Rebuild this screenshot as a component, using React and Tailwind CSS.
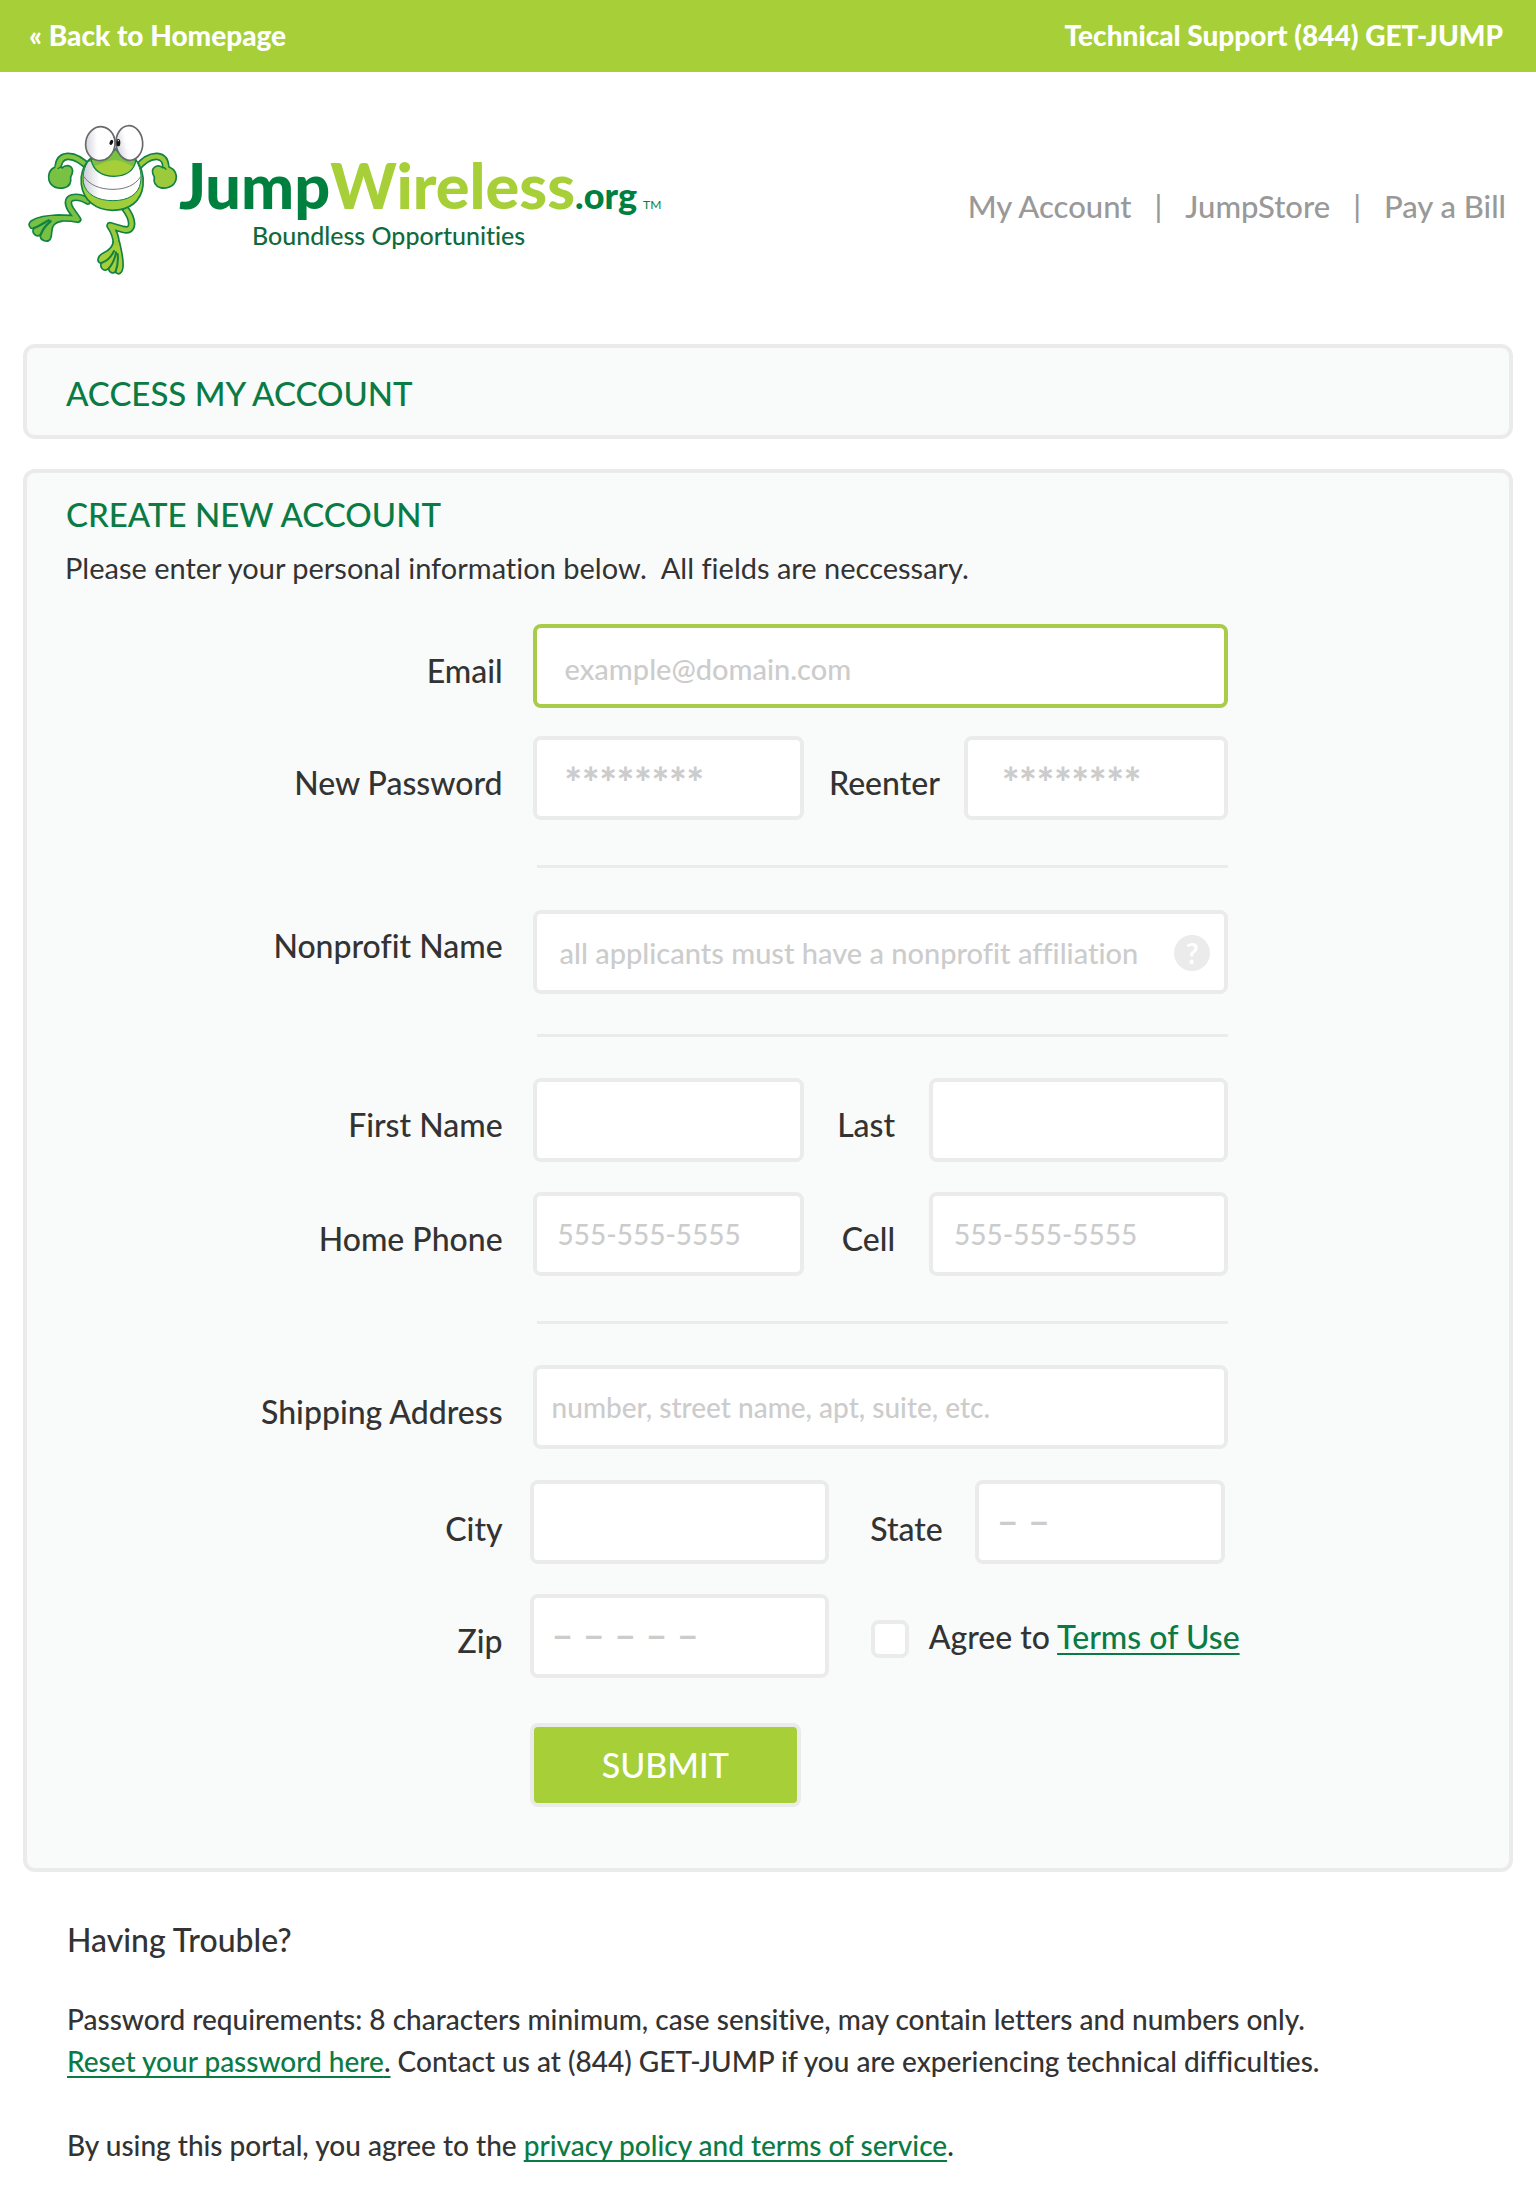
const FIELD =
  "h-[84px] min-w-0 rounded-lg border-4 border-[#ebebeb] bg-white text-[#333333] outline-none placeholder:text-[#cccccc] placeholder:opacity-100";
const LABEL = "whitespace-nowrap text-right text-[32px] leading-[40px] text-[#333333]";
const LINK = "text-[#0b7b45] underline decoration-2 underline-offset-4 [text-decoration-skip-ink:none]";
const STARS = "text-[29px] placeholder:text-[41px] placeholder:font-black";
const DASHES = "text-[28px] pl-[18px] pt-1 placeholder:text-[38px] placeholder:font-bold";

function Frog() {
  return (
    <svg viewBox="80 100 456 459" className="h-[153px] w-[152px] shrink-0" role="img" aria-label="Frog mascot">
      <defs>
        <linearGradient id="eye" x1="0" x2="1" y1="0.6" y2="0.4">
          <stop offset="0" stopColor="#d3d4dc" />
          <stop offset="0.4" stopColor="#ffffff" />
        </linearGradient>
        <linearGradient id="belly" x1="0" x2="1">
          <stop offset="0" stopColor="#c9cbd6" />
          <stop offset="0.28" stopColor="#ffffff" />
        </linearGradient>
      </defs>
      <g fill="none" strokeLinecap="round" strokeLinejoin="round">
        {/* arms */}
        <g stroke="#118243" strokeWidth="23">
          <path d="M268 236C245 212 222 199 202 200C182 201 173 216 173 240" />
          <path d="M408 238C428 212 450 199 470 200C492 202 498 218 496 242" />
        </g>
        <g stroke="#84c641" strokeWidth="13">
          <path d="M268 236C245 212 222 199 202 200C182 201 173 216 173 240" />
          <path d="M408 238C428 212 450 199 470 200C492 202 498 218 496 242" stroke="#9bcb3c" />
        </g>
        {/* hands */}
        <path d="M163 233C147 239 142 258 146 272C152 292 172 299 193 294C208 290 213 278 211 262C217 251 219 238 211 231C201 225 191 229 184 236" fill="#79c143" stroke="#118243" strokeWidth="5" />
        <path d="M507 232C524 239 531 256 527 270C521 290 500 299 480 294C464 289 459 278 462 262C456 252 454 240 462 233C472 226 482 229 490 237" fill="#9bcb3c" stroke="#118243" strokeWidth="5" />
        <path d="M170 231L172 240H182" stroke="#84c641" strokeWidth="9" />
        <path d="M499 229L497 242L489 240" stroke="#9bcb3c" strokeWidth="9" />
        <path d="M173 237C177 233 181 231 185 232M486 233C491 232 494 235 497 239" stroke="#118243" strokeWidth="4" />
        {/* left leg */}
        <path d="M262 334C245 324 228 321 216 324C200 329 202 344 211 359L232 389C205 383 190 385 165 386" stroke="#118243" strokeWidth="23" />
        <path d="M180 376C145 376 112 380 92 394C81 404 88 419 100 416C93 430 107 444 120 436C118 453 143 462 151 446C157 429 151 419 160 407C165 400 172 396 184 395Z" fill="#79c143" stroke="#118243" strokeWidth="5" />
        <path d="M262 334C245 324 228 321 216 324C200 329 202 344 211 359L232 389C205 383 190 385 165 386" stroke="#79c143" strokeWidth="13" />
        <path d="M101 415C116 411 130 400 145 392M121 435C127 418 138 405 151 395" stroke="#118243" strokeWidth="7" />
        {/* right leg */}
        <path d="M374 356C385 370 393 384 394 402C393 419 384 423 368 419L329 408C340 424 347 440 348 462" stroke="#118243" strokeWidth="23" />
        <path d="M339 455C338 470 326 482 309 490C292 498 287 516 302 521C298 538 314 547 324 537C330 555 342 549 345 547C355 558 366 551 368 532C370 510 364 483 357 455Z" fill="#a6ce39" stroke="#118243" strokeWidth="5" />
        <path d="M374 356C385 370 393 384 394 402C393 419 384 423 368 419L329 408C340 424 347 440 348 462" stroke="#98ca3c" strokeWidth="13" />
        <path d="M303 520C319 515 333 501 341 484M324 538C336 524 344 508 347 488M345 548C352 530 354 511 352 493" stroke="#118243" strokeWidth="6" />
      </g>
      {/* body */}
      <path d="M272 205C248 226 239 257 243 284C249 333 288 362 336 362C388 362 423 334 428 288C431 257 422 226 402 205Z" fill="#9fce3a" stroke="#118243" strokeWidth="5" />
      <path d="M265 214C250 233 247 254 249 279C257 315 292 333 338 333C383 333 415 315 421 277C425 252 418 229 406 212Z" fill="url(#belly)" stroke="#118243" strokeWidth="3" />
      <path d="M250 260C268 287 300 299 338 299C376 299 405 286 421 261" fill="none" stroke="#77777c" strokeWidth="3" />
      {/* face */}
      <path d="M345 178C330 200 300 205 272 209C278 240 302 259 341 260C381 259 402 240 407 211C380 207 362 200 345 178Z" fill="#79c143" stroke="#118243" strokeWidth="4" />
      <path d="M282 228C305 225 322 210 344 212C366 211 380 224 398 230C388 248 368 257 341 257C312 257 294 245 282 228Z" fill="#a6ce39" />
      {/* eyes */}
      <g stroke="#69696c" strokeWidth="5" fill="url(#eye)">
        <ellipse cx="300" cy="162" rx="44" ry="51" transform="rotate(8 300 162)" />
        <ellipse cx="387" cy="160" rx="40" ry="52" transform="rotate(-4 387 160)" />
      </g>
      <g fill="#111111">
        <ellipse cx="333" cy="158" rx="5" ry="8" transform="rotate(25 333 158)" />
        <ellipse cx="354" cy="159" rx="6" ry="11" />
      </g>
      <circle cx="354" cy="153" r="2" fill="#ffffff" />
    </svg>
  );
}

function Row({ id, label, labelClass = "pt-2.5", columns = "gap-x-[30px]", children }) {
  return (
    <div className={`grid grid-cols-[32%_47%] ${columns}`}>
      <label htmlFor={id} className={`self-center ${LABEL} ${labelClass}`}>
        {label}
      </label>
      <div className="flex items-center">{children}</div>
    </div>
  );
}

function Divider({ className }) {
  return (
    <div className={`grid grid-cols-[32%_47%] gap-x-[30px] ${className}`}>
      <hr className="col-start-2 ml-1 h-[3px] border-0 bg-[#ebebeb]" />
    </div>
  );
}

export default function App() {
  return (
    <div className="min-h-screen bg-white pb-8 font-['Lato','Open_Sans',sans-serif] text-[#333333] [font-variant-ligatures:none]">
      <div className="flex h-[72px] items-center justify-between bg-[#a6cf38] pr-[33px] pb-0.5 pl-[29px] text-[28px] leading-9 font-black text-white">
        <a href="#home">« Back to Homepage</a>
        <a href="#support">Technical Support (844) GET-JUMP</a>
      </div>

      <header className="flex h-[272px] items-start justify-between pr-[30px] pl-[27px]">
        <a href="#home" className="flex items-start pt-[51px]">
          <Frog />
          <span className="flex flex-col whitespace-nowrap">
            <span className="flex items-baseline pt-[27px] leading-[70px] font-black">
              <span className="text-[63px] text-[#00803f]">Jump</span>
              <span className="text-[63px] text-[#a6cf38]">Wireless</span>
              <span className="text-[36px] leading-none text-[#00803f]">.org</span>
              <span className="pl-1.5 text-[12px] leading-none font-normal text-[#00803f]">TM</span>
            </span>
            <span className="pl-[73px] text-[25px] leading-[30px] font-medium text-[#0f6b3c]">Boundless Opportunities</span>
          </span>
        </a>
        <nav className="flex gap-[23px] pt-[114px] text-[31px] leading-10 font-medium whitespace-nowrap text-[#999999]">
          <a href="#account">My Account</a>
          <span aria-hidden="true">|</span>
          <a href="#store">JumpStore</a>
          <span aria-hidden="true">|</span>
          <a href="#bill">Pay a Bill</a>
        </nav>
      </header>

      <main className="px-[23px]">
        <section className="rounded-xl border-4 border-[#ebebeb] bg-[#f9fbfa] px-[39px] pt-[25px] pb-[22px]">
          <h2 className="text-[33px] leading-10 font-medium text-[#0b7b45]">ACCESS MY ACCOUNT</h2>
        </section>

        <section className="mt-[30px] rounded-xl border-4 border-[#ebebeb] bg-[#f9fbfa] pt-[21px] pb-[61px]">
          <h2 className="px-[39px] text-[33px] leading-10 font-medium text-[#0b7b45]">CREATE NEW ACCOUNT</h2>
          <p className="mt-4 px-[38px] text-[29px] leading-9">
            Please enter your personal information below.&nbsp; All fields are neccessary.
          </p>

          <form className="mt-[38px] pl-0.5 font-medium" onSubmit={(e) => e.preventDefault()}>
            <Row id="email" label="Email">
              <input id="email" type="email" placeholder="example@domain.com" className={`${FIELD} w-full border-[#a9cb4a]! pt-1 pl-7 text-[29px]`} />
            </Row>
            <div className="h-7" />
            <Row id="password" label="New Password">
              <input id="password" type="password" placeholder="********" className={`${FIELD} ${STARS} w-[39%] pt-4 pl-7`} />
              <label htmlFor="reenter" className={`flex-1 pt-2.5 pr-6 ${LABEL}`}>Reenter</label>
              <input id="reenter" type="password" placeholder="********" className={`${FIELD} ${STARS} w-[38%] pt-4 pl-[34px]`} />
            </Row>

            <Divider className="my-[45px] mb-[42px]" />

            <Row id="nonprofit" label="Nonprofit Name" labelClass="pb-3">
              <div className="relative w-full">
                <input id="nonprofit" type="text" placeholder="all applicants must have a nonprofit affiliation" className={`${FIELD} w-full pr-16 pl-[23px] text-[29px]`} />
                <button type="button" aria-label="Help" className="absolute top-[25px] right-[18px] flex size-9 items-center justify-center rounded-full bg-[#ebebeb] text-[28px] leading-9 font-bold text-white">
                  ?
                </button>
              </div>
            </Row>

            <Divider className="mt-10 mb-[41px]" />

            <Row id="first" label="First Name">
              <input id="first" type="text" className={`${FIELD} w-[39%] pl-[21px] text-[28px]`} />
              <label htmlFor="last" className={`flex-1 pt-2.5 pr-[34px] ${LABEL}`}>Last</label>
              <input id="last" type="text" className={`${FIELD} w-[43%] pl-[21px] text-[28px]`} />
            </Row>
            <div className="h-[30px]" />
            <Row id="phone" label="Home Phone">
              <input id="phone" type="tel" placeholder="555-555-5555" className={`${FIELD} w-[39%] pl-[21px] text-[28px]`} />
              <label htmlFor="cell" className={`flex-1 pt-2.5 pr-[34px] ${LABEL}`}>Cell</label>
              <input id="cell" type="tel" placeholder="555-555-5555" className={`${FIELD} w-[43%] pl-[21px] text-[28px]`} />
            </Row>

            <Divider className="mt-[45px] mb-[41px]" />

            <Row id="address" label="Shipping Address">
              <input id="address" type="text" placeholder="number, street name, apt, suite, etc." className={`${FIELD} w-full pl-[15px] text-[28px]`} />
            </Row>
            <div className="h-[31px]" />
            <Row id="city" label="City" columns="gap-x-[27px]" labelClass="pt-3.5">
              <input id="city" type="text" className={`${FIELD} w-[43%] pl-[18px] text-[28px]`} />
              <label htmlFor="state" className={`flex-1 pt-3.5 pr-8 ${LABEL}`}>State</label>
              <input id="state" type="text" placeholder="– –" className={`${FIELD} ${DASHES} w-[36%]`} />
            </Row>
            <div className="h-[30px]" />
            <Row id="zip" label="Zip" columns="gap-x-[27px]">
              <input id="zip" type="text" placeholder="– – – – –" className={`${FIELD} ${DASHES} w-[43%] shrink-0`} />
              <input id="agree" type="checkbox" className="mt-1.5 ml-[42px] size-[38px] shrink-0 appearance-none rounded-lg border-4 border-[#ebebeb] bg-white checked:bg-[#a6cf38]" />
              <label htmlFor="agree" className={`pt-0.5 pl-5 ${LABEL}`}>
                Agree to <a href="#terms" className={LINK}>Terms of Use</a>
              </label>
            </Row>

            <div className="mt-[45px] grid grid-cols-[32%_47%] gap-x-[27px]">
              <button type="submit" className="col-start-2 h-[84px] w-[39%] rounded-lg border-4 border-[#ebebeb] bg-[#a6cf38] text-[34px] leading-10 font-medium text-white">
                SUBMIT
              </button>
            </div>
          </form>
        </section>
      </main>

      <footer className="px-[67px] pt-[47px] text-[28px] leading-[42px] font-medium">
        <h3 className="text-[32px]">Having Trouble?</h3>
        <p className="mt-[37px]">
          Password requirements: 8 characters minimum, case sensitive, may contain letters and numbers only.
          <br />
          <a href="#reset" className={LINK}>
            Reset your password here<span className="text-[#333333]">.</span>
          </a>{" "}
          Contact us at (844) GET-JUMP if you are experiencing technical difficulties.
        </p>
        <p className="mt-[42px]">
          By using this portal, you agree to the <a href="#privacy" className={LINK}>privacy policy and terms of service</a>.
        </p>
      </footer>
    </div>
  );
}
